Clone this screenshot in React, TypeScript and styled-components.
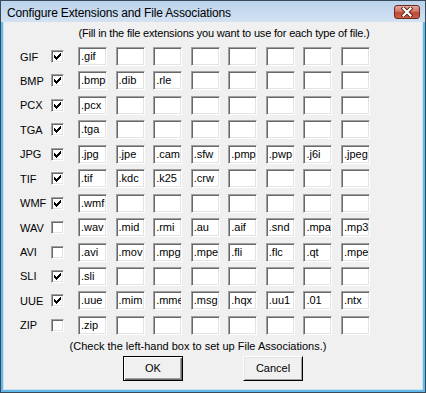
import React from 'react';
import styled, { createGlobalStyle } from 'styled-components';

interface FileType {
  name: string;
  checked: boolean;
  exts: string[];
}

const TYPES: FileType[] = [
  { name: 'GIF', checked: true, exts: ['.gif'] },
  { name: 'BMP', checked: true, exts: ['.bmp', '.dib', '.rle'] },
  { name: 'PCX', checked: true, exts: ['.pcx'] },
  { name: 'TGA', checked: true, exts: ['.tga'] },
  { name: 'JPG', checked: true, exts: ['.jpg', '.jpe', '.cam', '.sfw', '.pmp', '.pwp', '.j6i', '.jpeg'] },
  { name: 'TIF', checked: true, exts: ['.tif', '.kdc', '.k25', '.crw'] },
  { name: 'WMF', checked: true, exts: ['.wmf'] },
  { name: 'WAV', checked: false, exts: ['.wav', '.mid', '.rmi', '.au', '.aif', '.snd', '.mpa', '.mp3'] },
  { name: 'AVI', checked: false, exts: ['.avi', '.mov', '.mpg', '.mpe', '.fli', '.flc', '.qt', '.mpe'] },
  { name: 'SLI', checked: true, exts: ['.sli'] },
  { name: 'UUE', checked: true, exts: ['.uue', '.mim', '.mme', '.msg', '.hqx', '.uu1', '.01', '.ntx'] },
  { name: 'ZIP', checked: false, exts: ['.zip'] },
];

const GlobalStyle = createGlobalStyle`
  html, body {
    margin: 0;
    padding: 0;
    background: #ffffff;
  }
  body {
    font-family: "Liberation Sans", Arial, sans-serif;
    font-size: 11px;
    color: #000;
  }
`;

const Window = styled.div`
  width: 426px;
  height: 393px;
  box-sizing: border-box;
  border: 1px solid #3b4a58;
  display: flex;
  flex-direction: column;
  background: #b9d1ea;
`;

const TitleBar = styled.div`
  height: 21px;
  flex: none;
  display: flex;
  align-items: flex-start;
  justify-content: space-between;
  padding: 0 5px 0 6px;
  background: linear-gradient(#bad2ec, #d3e2f2);
`;

const Title = styled.span`
  font-size: 12px;
  line-height: 12px;
  letter-spacing: -0.15px;
  margin-top: 6px;
  color: #000;
`;

const CloseButton = styled.div`
  width: 26px;
  height: 14px;
  margin-top: 4px;
  box-sizing: border-box;
  border: 1px solid #6e2b22;
  border-radius: 3px;
  background: linear-gradient(#e3a89c 0%, #d27463 45%, #c04a35 55%, #c8604a 100%);
  display: flex;
  align-items: center;
  justify-content: center;
`;

const Frame = styled.div`
  flex: 1;
  display: flex;
  border: 2px solid #62b8e8;
  border-top: none;
  background: #f0f0f0;
`;

const Client = styled.div`
  flex: 1;
  border: 1px solid #cbe3f6;
  border-top: none;
  padding: 5px 0 0 16px;
  display: flex;
  flex-direction: column;
`;

const Note = styled.div<{ $left: number; $width: number; $tight?: boolean }>`
  margin-left: ${({ $left }) => $left}px;
  width: ${({ $width }) => $width}px;
  height: 13px;
  line-height: 13px;
  display: flex;
  justify-content: center;
  white-space: nowrap;
  letter-spacing: ${({ $tight }) => ($tight ? '-0.18px' : '0')};
`;

const Rows = styled.div`
  margin-top: 7px;
  display: flex;
  flex-direction: column;
  gap: 5.45px;
`;

const Row = styled.div`
  height: 19px;
  display: flex;
  align-items: center;
`;

const Label = styled.span`
  width: 31px;
  flex: none;
`;

const CheckCell = styled.div`
  width: 27px;
  flex: none;
  display: flex;
`;

const CheckBox = styled.span`
  width: 13px;
  height: 13px;
  box-sizing: border-box;
  background: #fff;
  border: 1px solid;
  border-color: #a0a0a0 #ffffff #ffffff #a0a0a0;
  box-shadow: inset 1px 1px #696969, inset -1px -1px #e3e3e3;
  position: relative;
`;

const Fields = styled.div`
  display: grid;
  grid-template-columns: repeat(8, 29px);
  column-gap: 8.57px;
`;

const Field = styled.div`
  width: 29px;
  height: 19px;
  box-sizing: border-box;
  background: #fff;
  border: 1px solid;
  border-color: #a0a0a0 #ffffff #ffffff #a0a0a0;
  box-shadow: inset 1px 1px #696969, inset -1px -1px #e3e3e3;
  padding: 0 0 0 2px;
  line-height: 16px;
  overflow: hidden;
  white-space: nowrap;
`;

const Buttons = styled.div`
  margin: 3px 0 0 103px;
  display: flex;
  gap: 60px;
`;

const Button = styled.button<{ $default?: boolean }>`
  width: 60px;
  height: 25px;
  box-sizing: border-box;
  padding: 0;
  font-family: "Liberation Sans", Arial, sans-serif;
  font-size: 11px;
  color: #000;
  background: #f0f0f0;
  border: 1px solid;
  border-color: ${({ $default }) => ($default ? '#000 #000 #000 #000' : '#ffffff #000 #000 #ffffff')};
  box-shadow: ${({ $default }) =>
    $default
      ? 'inset 1px 1px #ffffff, inset -1px -1px #696969, inset -2px -2px #a0a0a0'
      : 'inset 1px 1px #e3e3e3, inset -1px -1px #a0a0a0'};
`;

const CheckMark = () => (
  <svg width="13" height="13" viewBox="0 0 13 13" style={{ position: 'absolute', left: -1, top: -1 }}>
    <path
      d="M3 5h1v3H3zM4 6h1v3H4zM5 7h1v3H5zM6 6h1v3H6zM7 5h1v3H7zM8 4h1v3H8zM9 3h1v3H9z"
      fill="#000"
      shapeRendering="crispEdges"
    />
  </svg>
);

const CloseGlyph = () => (
  <svg width="12" height="10" viewBox="0 0 12 10">
    <path d="M2.5 1.5l7 7M9.5 1.5l-7 7" stroke="#5a2018" strokeWidth="4" strokeLinecap="square" />
    <path d="M2.5 1.5l7 7M9.5 1.5l-7 7" stroke="#ffffff" strokeWidth="2.2" strokeLinecap="square" />
  </svg>
);

const App: React.FC = () => {
  return (
    <>
      <GlobalStyle />
      <Window>
        <TitleBar>
          <Title>Configure Extensions and File Associations</Title>
          <CloseButton>
            <CloseGlyph />
          </CloseButton>
        </TitleBar>
        <Frame>
          <Client>
            <Note $left={58} $width={292} $tight>
              (Fill in the file extensions you want to use for each type of file.)
            </Note>
            <Rows>
              {TYPES.map((t) => (
                <Row key={t.name}>
                  <Label>{t.name}</Label>
                  <CheckCell>
                    <CheckBox>{t.checked && <CheckMark />}</CheckBox>
                  </CheckCell>
                  <Fields>
                    {Array.from({ length: 8 }, (_, i) => (
                      <Field key={i}>{t.exts[i] ?? ''}</Field>
                    ))}
                  </Fields>
                </Row>
              ))}
            </Rows>
            <Note $left={50} $width={256} style={{ marginTop: 5 }}>
              (Check the left-hand box to set up File Associations.)
            </Note>
            <Buttons>
              <Button $default>OK</Button>
              <Button>Cancel</Button>
            </Buttons>
          </Client>
        </Frame>
      </Window>
    </>
  );
};

export default App;
